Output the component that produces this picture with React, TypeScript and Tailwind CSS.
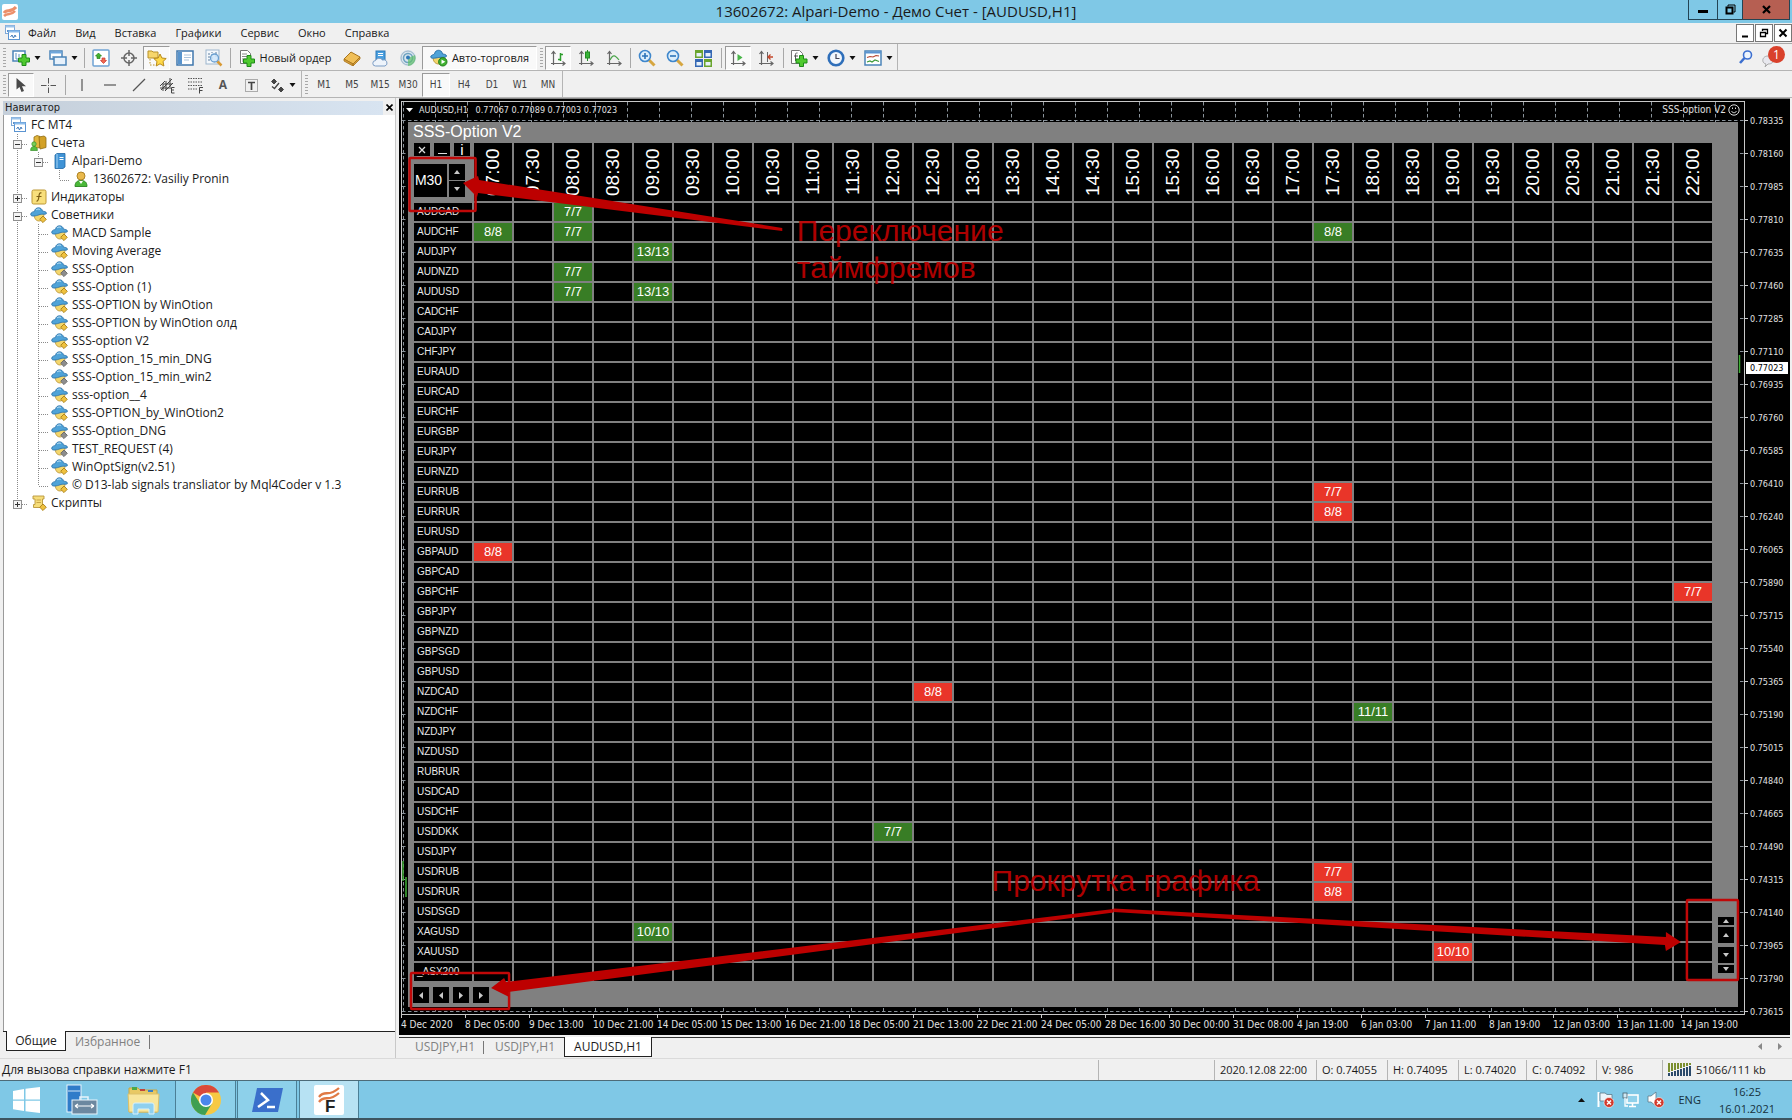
import React from "react";

type P = { className?: string };

/* ---------- icons ---------- */
const MtLogo = () => (
  <svg width="16" height="16" viewBox="0 0 16 16" className="shrink-0">
    <rect x="1.500" y=".5" width="9" height="8" fill="#fff" stroke="#7fa9d8" />
    <rect x="1.500" y=".5" width="9" height="2" fill="#9cc3ea" />
    <path d="M3.500 7 v-2 m2 3 v-3" stroke="#5b8fc9" />
    <rect x="4.500" y="5.500" width="11" height="9" fill="#fff" stroke="#5b94d1" />
    <rect x="4.500" y="5.500" width="11" height="2" fill="#8bbcec" />
    <path d="M6.500 12 l1.500-2 1.500 3 1.500-3 1 2" fill="none" stroke="#3f78b8" />
  </svg>
);
const Brand = () => (
  <svg width="16" height="16" viewBox="0 0 16 16" aria-hidden="true">
    <rect width="16" height="16" rx="2" fill="#fff" />
    <path d="M2 9 C5 4 8 10 14 3" stroke="#ec8f6a" strokeWidth="3" fill="none" />
    <path d="M2 12 C6 8 9 12 13 7" stroke="#ec8f6a" strokeWidth="2.500" fill="none" />
  </svg>
);
const GreenPlus = ({ x = 0, y = 0 }: { x?: number; y?: number }) => (
  <path transform={`translate(${x} ${y})`} d="M4 0.500h4v3.500h3.500v4H8v3.500H4V8H0.500V4H4z" fill="#4fc92f" stroke="#1c8a18" />
);
const NewChart = () => (
  <svg width="18" height="18" viewBox="0 0 18 18">
    <rect x="1" y="2" width="12" height="10" fill="#fff" stroke="#4b84b8" strokeWidth="1.500" />
    <path d="M4 4v6h6M7 5v3" stroke="#5a90c4" fill="none" />
    <GreenPlus x={6} y={5} />
  </svg>
);
const Profiles = () => (
  <svg width="18" height="18" viewBox="0 0 18 18">
    <rect x="1" y="2" width="12" height="8" fill="#fff" stroke="#4b84b8" strokeWidth="1.500" />
    <path d="M1 3.500h12" stroke="#6fa7dc" strokeWidth="2" />
    <rect x="5" y="8" width="12" height="8" fill="#e7f1fb" stroke="#4b84b8" strokeWidth="1.500" />
    <path d="M4 7v4" stroke="#4b84b8" />
  </svg>
);
const MarketWatch = () => (
  <svg width="18" height="18" viewBox="0 0 18 18">
    <rect x="1" y="1" width="16" height="16" rx="1" fill="#fff" stroke="#6fa3d4" strokeWidth="1.500" />
    <path d="M6.500 4l3 3h-1.500v2.500h-3V7H3.500z" fill="#43b32e" stroke="#23811a" strokeWidth=".7" />
    <path d="M11.500 14.500l3-3h-1.500V9h-3v2.500H8.500z" fill="#ef6a4e" stroke="#c33" strokeWidth=".7" />
  </svg>
);
const DataWindow = () => (
  <svg width="16" height="16" viewBox="0 0 16 16">
    <circle cx="8" cy="8" r="5" fill="none" stroke="#666" strokeWidth="1.500" />
    <path d="M8 0v6M8 10v6M0 8h6M10 8h6" stroke="#666" strokeWidth="1.500" />
  </svg>
);
const NavStar = () => (
  <svg width="20" height="18" viewBox="0 0 20 18">
    <path d="M1 2h4l1 1h5v6H1z" fill="#f7d66b" stroke="#b8912a" />
    <path d="M3 10v6h6" fill="none" stroke="#b8912a" strokeDasharray="1.500 1.500" />
    <path d="M13 5l1.900 4 4.300.5-3.200 3 .9 4.500-3.900-2.200L9.200 17l.8-4.500-3.200-3L11.200 9z" fill="#ffd948" stroke="#b88a1c" />
  </svg>
);
const Terminal = () => (
  <svg width="18" height="16" viewBox="0 0 18 16">
    <rect x="1" y="1" width="16" height="14" fill="#fff" stroke="#3f77ad" strokeWidth="1.500" />
    <rect x="2" y="2" width="4" height="12" fill="#5893cc" />
    <path d="M8 5h7M8 7.500h7M8 10h5" stroke="#aac3dc" />
  </svg>
);
const Tester = () => (
  <svg width="18" height="18" viewBox="0 0 18 18">
    <rect x="1" y="1" width="13" height="14" fill="#f4f8fc" stroke="#9db6cd" />
    <path d="M4 12V4M7 10V3M11 8V3" stroke="#5f7f9f" strokeDasharray="2 1" />
    <path d="M12 12l4.500 4.500" stroke="#d99a35" strokeWidth="2.500" />
    <circle cx="9.500" cy="9" r="4" fill="#cfe6fa" fillOpacity=".85" stroke="#6a9fd0" strokeWidth="1.300" />
  </svg>
);
const NewOrder = () => (
  <svg width="17" height="18" viewBox="0 0 17 18">
    <path d="M1.500 1.500h7l3 3v10h-10z" fill="#fff" stroke="#777" />
    <path d="M3 5h5M3 7.500h6M3 10h4M3 12h3" stroke="#888" />
    <GreenPlus x={4} y={6} />
  </svg>
);
const Book = () => (
  <svg width="18" height="16" viewBox="0 0 18 16">
    <path d="M1 9L8 2l9 5-7 7z" fill="#f0bf58" stroke="#a8741c" />
    <path d="M1 9v2l9 5v-2zM10 14v2l7-7V7z" fill="#d6a03c" stroke="#a8741c" strokeWidth=".8" />
  </svg>
);
const Cloud = () => (
  <svg width="17" height="17" viewBox="0 0 17 17">
    <rect x="4" y="1" width="9" height="9" fill="#4ba0e0" stroke="#2b78b8" />
    <path d="M6 3.500h5M6 5.500h5" stroke="#fff" />
    <path d="M3.500 16a2.700 2.700 0 010-5.400 4 4 0 017-.6 3 3 0 012.500 6z" fill="#eef4fb" stroke="#7b9cc4" />
  </svg>
);
const Signal = () => (
  <svg width="18" height="18" viewBox="0 0 18 18">
    <circle cx="9" cy="9" r="8" fill="#d9e5ee" />
    <circle cx="9" cy="9" r="7" fill="none" stroke="#9bb4c8" />
    <circle cx="9" cy="9" r="4.500" fill="none" stroke="#6fa3c0" strokeWidth="1.500" />
    <path d="M9 9v8a8 8 0 007-11z" fill="#5fbf6a" fillOpacity=".7" />
    <circle cx="9" cy="8.500" r="2" fill="#2f79b8" />
  </svg>
);
const Expert = ({ off = false }: { off?: boolean }) => (
  <svg width="17" height="16" viewBox="0 0 17 16" className="shrink-0">
    <path d="M4 6.500c0 5 2 7.500 5 7.500s5-3 5-7.500z" fill="#f3d66c" stroke="#bb9638" strokeWidth=".8" />
    <path d="M.7 7.500C.7 5 4 4.600 4.500 4.400 5 1.500 7 .8 8.500.8s3.500.7 4 3.400c.8 0 4 .4 4 2C16.500 8 12 6.500 9 7.800 6 9 1 10 .7 7.500z" fill="#4fa3d8" stroke="#2c74ab" strokeWidth=".9" />
    <path d="M6 3c1-1.200 3-1.200 4-.5" stroke="#b9def5" fill="none" />
    <path d="M13 9l3.300 3.300L13 15.600 9.700 12.300z" fill={off ? "#8d8d8d" : "#efc13e"} stroke={off ? "#666" : "#a97f16"} strokeWidth=".9" />
  </svg>
);
const AutoTrade = () => (
  <svg width="18" height="18" viewBox="0 0 18 18">
    <path d="M3 8c0 5 3 7 5.500 7S14 13 14 8z" fill="#f3d66c" stroke="#bb9638" />
    <path d="M.7 8C.7 6 4 5.600 4.500 5 5 2 7 1.300 8.500 1.300S12 2 12.500 5c.8 0 4 .4 4 2 0 2-5 1-8 1.500S1 10 .7 8z" fill="#4fa3d8" stroke="#2c74ab" />
    <circle cx="12.800" cy="12.800" r="4.200" fill="#3fb030" stroke="#1f7d18" />
    <path d="M11.500 10.500v4.600l3.800-2.300z" fill="#fff" />
  </svg>
);
const Axes = ({ children }: { children?: React.ReactNode }) => (
  <svg width="16" height="16" viewBox="0 0 16 16">
    <path d="M3.500 15V2M1 13.500h13M1.500 4l2-2.500 2 2.500M12.500 11.500l2.500 2-2.500 2" fill="none" stroke="#666" strokeWidth="1.200" />
    {children}
  </svg>
);
const Zoom = ({ plus = false }: { plus?: boolean }) => (
  <svg width="18" height="18" viewBox="0 0 18 18">
    <path d="M11 11l5.500 5.500" stroke="#d6a640" strokeWidth="3" />
    <circle cx="7" cy="7" r="5.500" fill="#dceefb" stroke="#3f87cc" strokeWidth="1.600" />
    <path d={plus ? "M4 7h6M7 4v6" : "M4 7h6"} stroke="#2b73b9" strokeWidth="1.600" />
  </svg>
);
const Tile = () => (
  <svg width="17" height="17" viewBox="0 0 17 17">
    <rect width="8" height="8" fill="#6aa52e" /><rect x="9" width="8" height="8" fill="#3568b4" />
    <rect y="9" width="8" height="8" fill="#3568b4" /><rect x="9" y="9" width="8" height="8" fill="#6aa52e" />
    <path d="M1.500 3h5v3.500h-5zM10.500 3h5v3.500h-5zM1.500 12h5v3.500h-5zM10.500 12h5v3.500h-5z" fill="#e8f2fb" />
  </svg>
);
const Indicator = () => (
  <svg width="18" height="18" viewBox="0 0 18 18">
    <path d="M1.500 1.500h8l3 3v10h-11z" fill="#fff" stroke="#777" />
    <path d="M7.500 4c-2-.5-2 1-2 3v5M4 7h4" stroke="#555" fill="none" />
    <GreenPlus x={5.500} y={6} />
  </svg>
);
const Clock = () => (
  <svg width="18" height="18" viewBox="0 0 18 18">
    <circle cx="9" cy="9" r="7.300" fill="#f2f7fc" stroke="#2f6fba" strokeWidth="2.600" />
    <path d="M9 5v4.500h3.500" stroke="#445" fill="none" strokeWidth="1.200" />
  </svg>
);
const Template = () => (
  <svg width="18" height="16" viewBox="0 0 18 16">
    <rect x="1" y="1" width="16" height="14" fill="#fff" stroke="#4b84b8" strokeWidth="1.500" />
    <path d="M1 2.500h16" stroke="#5b94d1" strokeWidth="2" />
    <path d="M3 7.500l3-1 3 .5 3-1.500 3 .5" stroke="#b5442e" fill="none" strokeWidth="1.200" />
    <path d="M3 12l3-1 2 1 3-2 4 1.500" stroke="#3d9a38" fill="none" strokeWidth="1.200" />
  </svg>
);
const Cursor = () => (
  <svg width="12" height="16" viewBox="0 0 12 16"><path d="M1.500 1v11.500l3-2.500 2 5 2.500-1-2-4.800H11z" fill="#4a4a4a" /></svg>
);
const Cross = () => (
  <svg width="15" height="15" viewBox="0 0 15 15"><path d="M7.500 0v5.500M7.500 9.500V15M0 7.500h5.500M9.500 7.500H15" stroke="#555" /><rect x="7" y="7" width="1" height="1" fill="#555" /></svg>
);
const Line = ({ d }: { d: string }) => (
  <svg width="14" height="14" viewBox="0 0 14 14"><path d={d} stroke="#555" strokeWidth="1.200" /></svg>
);
const Equi = () => (
  <svg width="17" height="17" viewBox="0 0 17 17">
    <path d="M1 9l5-5M2 13L13 2M6 14l8-8M1 11h11M4 7h9M7 4v9M11 1v9M4 7v7" stroke="#444" />
    <path d="M15.500 10.500H12.500v5.500h3M12.500 13h2.500" stroke="#444" fill="none" />
  </svg>
);
const Fibo = () => (
  <svg width="17" height="17" viewBox="0 0 17 17">
    <path d="M1 1.500h14M1 5h14M1 8.500h14M1 12h9" stroke="#555" strokeDasharray="1.500 1" />
    <path d="M12.500 16.500v-6h3.500M12.500 13.500h3" stroke="#444" fill="none" />
  </svg>
);
const TextBox = () => (
  <svg width="15" height="15" viewBox="0 0 15 15">
    <rect x="1.500" y="1.500" width="12" height="12" fill="none" stroke="#666" strokeDasharray="1 1" />
    <path d="M4 4.500h7M7.500 4.500V12" stroke="#444" strokeWidth="1.700" />
  </svg>
);
const Arrows = () => (
  <svg width="15" height="15" viewBox="0 0 15 15">
    <path d="M4 1l2.500 2.500L4 6 1.500 3.500zM11 9l2.500 2.500L11 14l-2.500-2.500z" fill="#444" stroke="#444" />
    <path d="M2 8.500l2.500 2L9 5" fill="none" stroke="#444" strokeWidth="1.300" />
  </svg>
);
const Accounts = () => (
  <svg width="17" height="16" viewBox="0 0 17 16" className="shrink-0">
    <path d="M4 2l3-1.500 3 1v11l-6 1z" fill="#e2b63c" stroke="#8f6c14" strokeWidth=".8" />
    <path d="M9 2l5-1 2 1.500v10L10 14z" fill="#d3a126" stroke="#8f6c14" strokeWidth=".8" />
    <circle cx="4" cy="9" r="2.200" fill="#7ccf58" stroke="#37912a" strokeWidth=".7" />
    <path d="M.6 15.500c0-3 1.500-4 3.400-4s3.400 1 3.400 4z" fill="#58be42" stroke="#37912a" strokeWidth=".7" />
  </svg>
);
const Server = () => (
  <svg width="16" height="16" viewBox="0 0 16 16" className="shrink-0">
    <path d="M3 2l2-1.500h8V14l-2 1.500H3z" fill="#3f93d6" stroke="#2067a5" strokeWidth=".8" />
    <path d="M5 1v14" stroke="#a9d4f2" /><path d="M7.500 4.500h4M7.500 6.500h4" stroke="#fff" />
  </svg>
);
const Person = () => (
  <svg width="16" height="16" viewBox="0 0 16 16" className="shrink-0">
    <path d="M2 15.500C2 11 4.500 9.500 8 9.500s6 1.500 6 6z" fill="#4ab839" stroke="#2a8520" strokeWidth=".9" />
    <path d="M6 10l2 3 2-3z" fill="#fff" />
    <circle cx="8" cy="5" r="4" fill="#eab94c" stroke="#a67a1c" strokeWidth=".9" />
  </svg>
);
const Func = () => (
  <svg width="16" height="16" viewBox="0 0 16 16" className="shrink-0">
    <rect x="1" y="1" width="14" height="14" rx="1.500" fill="#f8df7c" stroke="#bd9834" />
    <path d="M10.500 4c-2-.8-2.300 1-2.600 3.500S7 12.500 5.500 12M5.500 7.500h5" stroke="#7c5d12" fill="none" strokeWidth="1.200" />
  </svg>
);
const Script = () => (
  <svg width="16" height="16" viewBox="0 0 16 16" className="shrink-0">
    <path d="M2 1h11v3h-1.500v8.500H2.500v-3H4V4H2z" fill="#f6dd7a" stroke="#b8953a" strokeWidth=".9" />
    <path d="M5.500 5h4.500M5.500 7.500h4.500" stroke="#c8a548" />
    <path d="M12 9l3.300 3.200L12 15.500 8.700 12.200z" fill="#efc13e" stroke="#a97f16" strokeWidth=".9" />
  </svg>
);
const Drop = () => (
  <svg width="7" height="4" viewBox="0 0 7 4" aria-hidden="true"><path d="M.5 0h6L3.500 4z" fill="#111" /></svg>
);

/* ---------- toolbar pieces ---------- */
const Grip = () => (
  <div className="flex w-2 shrink-0 items-center justify-center">
    <div className="h-5 w-[3px] bg-[repeating-linear-gradient(#a8a8a8_0_1px,#f0f0f0_1px_3px)]" />
  </div>
);
const Sep = ({ className = "w-1" }: P) => (
  <div className={`flex shrink-0 justify-center py-0.5 ${className}`}><div className="w-px bg-[#a8a8a8]" /></div>
);
const Tool = ({ label, w = "w-7", on = false, drop = false, children }: { label: string; w?: string; on?: boolean; drop?: boolean; children: React.ReactNode }) => (
  <button aria-label={label} title={label} className={`flex shrink-0 items-center justify-center gap-1 whitespace-nowrap ${w} ${on ? "border border-r-[#fff] border-b-[#fff] border-[#9a9a9a] bg-[#f9f9f9]" : ""}`}>
    {children}
    {drop && <Drop />}
  </button>
);

/* ---------- navigator ---------- */
type Guide = "v" | "t" | "e" | "n" | "minus" | "minusLast" | "plus" | "plusLast";
const GuideCell = ({ g }: { g: Guide }) => {
  const box = g.startsWith("minus") || g.startsWith("plus");
  const down = g === "v" || g === "t" || g === "minus" || g === "plus";
  return (
    <svg width="21" height="18" viewBox="0 0 21 18" className="shrink-0">
      {g !== "n" && <path d={down ? "M10.500 0v18" : "M10.500 0v10"} stroke="#8a8a8a" strokeDasharray="1 1" />}
      {g !== "n" && g !== "v" && <path d="M11 10.500h10" stroke="#8a8a8a" strokeDasharray="1 1" />}
      {box && <rect x="6.500" y="6.500" width="8" height="8" fill="#f4f4f4" stroke="#8f8f8f" />}
      {box && <path d={g.startsWith("plus") ? "M8 10.500h5M10.500 8v5" : "M8 10.500h5"} stroke="#333" />}
    </svg>
  );
};
const tree: [Guide[], React.ReactNode, string][] = [
  [["minus"], <Accounts />, "Счета"],
  [["v", "minusLast"], <Server />, "Alpari-Demo"],
  [["v", "n", "e"], <Person />, "13602672: Vasiliy Pronin"],
  [["plus"], <Func />, "Индикаторы"],
  [["minus"], <Expert />, "Советники"],
  [["v", "t"], <Expert />, "MACD Sample"],
  [["v", "t"], <Expert />, "Moving Average"],
  [["v", "t"], <Expert off />, "SSS-Option"],
  [["v", "t"], <Expert />, "SSS-Option (1)"],
  [["v", "t"], <Expert />, "SSS-OPTION by WinOtion"],
  [["v", "t"], <Expert />, "SSS-OPTION by WinOtion олд"],
  [["v", "t"], <Expert />, "SSS-option V2"],
  [["v", "t"], <Expert off />, "SSS-Option_15_min_DNG"],
  [["v", "t"], <Expert off />, "SSS-Option_15_min_win2"],
  [["v", "t"], <Expert />, "sss-option__4"],
  [["v", "t"], <Expert />, "SSS-OPTION_by_WinOtion2"],
  [["v", "t"], <Expert off />, "SSS-Option_DNG"],
  [["v", "t"], <Expert off />, "TEST_REQUEST (4)"],
  [["v", "t"], <Expert />, "WinOptSign(v2.51)"],
  [["v", "e"], <Expert />, "© D13-lab signals transliator by Mql4Coder v 1.3"],
  [["plusLast"], <Script />, "Скрипты"],
];
const Navigator = () => (
  <aside className="flex w-[396px] shrink-0 flex-col border-r border-[#c8c8c8] pt-0.5 pl-[3px]">
    <div className="flex h-[15px] items-center justify-between">
      <h2 className="flex-1 bg-gradient-to-r from-[#c5cfda] to-[#d8e4f1] pl-0.5 font-['DejaVu_Sans_Condensed','DejaVu_Sans',sans-serif] text-[11px] leading-[14px] text-[#222]">Навигатор</h2>
      <button aria-label="Закрыть" className="flex w-3 justify-center">
        <svg width="7" height="7" viewBox="0 0 7 7"><path d="M.5.5l6 6M6.500.5l-6 6" stroke="#000" strokeWidth="1.600" /></svg>
      </button>
    </div>
    <ul className="flex-1 border-l border-[#9a9a9a] bg-white pt-px pl-[3px]">
      <li className="flex h-[18px] items-center gap-[5px] pl-[3px]"><MtLogo /><span>FC MT4</span></li>
      {tree.map(([g, icon, text]) => (
        <li key={text} className="flex h-[18px] items-center whitespace-nowrap">
          {g.map((x, i) => <GuideCell key={i} g={x} />)}
          <span className="ml-0.5 flex items-center gap-1">
            <span className="flex w-[17px] justify-center">{icon}</span>{text}
          </span>
        </li>
      ))}
    </ul>
    <div className="flex h-[27px] items-start border-t border-[#222]">
      <button className="-mt-px ml-[3px] h-5 w-[60px] border border-t-0 border-[#222] bg-white">Общие</button>
      <button className="h-5 px-[9px] text-[#808080]">Избранное</button>
      <span className="mt-[3px] h-[14px] w-px bg-[#777]" />
    </div>
  </aside>
);

/* ---------- matrix ---------- */
const times = Array.from({ length: 31 }, (_, i) => `${String(7 + Math.floor(i / 2)).padStart(2, "0")}:${i % 2 ? "30" : "00"}`);
const symbols = "AUDCAD AUDCHF AUDJPY AUDNZD AUDUSD CADCHF CADJPY CHFJPY EURAUD EURCAD EURCHF EURGBP EURJPY EURNZD EURRUB EURRUR EURUSD GBPAUD GBPCAD GBPCHF GBPJPY GBPNZD GBPSGD GBPUSD NZDCAD NZDCHF NZDJPY NZDUSD RUBRUR USDCAD USDCHF USDDKK USDJPY USDRUB USDRUR USDSGD XAGUSD XAUUSD _ASX200".split(" ");
const signals: Record<string, [string, "up" | "down"]> = {
  "AUDCAD 08:00": ["7/7", "up"], "AUDCHF 07:00": ["8/8", "up"], "AUDCHF 08:00": ["7/7", "up"], "AUDCHF 17:30": ["8/8", "up"],
  "AUDJPY 09:00": ["13/13", "up"], "AUDNZD 08:00": ["7/7", "up"], "AUDUSD 08:00": ["7/7", "up"], "AUDUSD 09:00": ["13/13", "up"],
  "EURRUB 17:30": ["7/7", "down"], "EURRUR 17:30": ["8/8", "down"], "GBPAUD 07:00": ["8/8", "down"], "GBPCHF 22:00": ["7/7", "down"],
  "NZDCAD 12:30": ["8/8", "down"], "NZDCHF 18:00": ["11/11", "up"], "USDDKK 12:00": ["7/7", "up"], "USDRUB 17:30": ["7/7", "down"],
  "USDRUR 17:30": ["8/8", "down"], "XAGUSD 09:00": ["10/10", "up"], "XAUUSD 19:00": ["10/10", "down"],
};
const tri = { up: "M0 4h6L3 0z", down: "M0 0h6L3 4z", left: "M4 0v7L0 3.500z", right: "M0 0v7l4-3.500z" };
const Step = ({ dir, label, h = "h-4" }: { dir: keyof typeof tri; label: string; h?: string }) => {
  const side = dir === "left" || dir === "right";
  return (
    <button aria-label={label} className={`flex w-4 items-center justify-center bg-black ${h}`}>
      <svg width={side ? 4 : 6} height={side ? 7 : 4}><path d={tri[dir]} fill="#c8c8c8" /></svg>
    </button>
  );
};
const Matrix = () => (
  <section className="relative mx-[6px] bg-[#808080] pl-1 font-['Liberation_Sans',Arial,sans-serif] text-white">
    <h1 className="h-[19px] pl-px text-[16px] leading-5">SSS-Option V2</h1>
    <div className="flex">
      <div className="min-w-0 flex-1">
        <table className="w-full table-fixed border-separate border-spacing-[2px]">
          <thead>
            <tr>
              <th className="h-[58px] w-[58px] p-0 align-top font-normal">
                <div className="flex h-[13px] gap-1">
                  <button aria-label="Закрыть панель" className="flex w-4 items-center justify-center bg-black"><svg width="8" height="8"><path d="M1 1l6 6M7 1L1 7" stroke="#ddd" strokeWidth="1.300" /></svg></button>
                  <button aria-label="Свернуть панель" className="flex w-4 items-end justify-center bg-black pb-0.5"><span className="h-px w-[9px] bg-[#ddd]" /></button>
                  <button className="w-4 bg-black text-[15px] leading-[14px]">i</button>
                </div>
                <div className="mt-2 flex h-[33px] gap-0.5">
                  <span className="w-[33px] bg-black pr-1 text-center text-[14px] leading-[33px]">M30</span>
                  <span className="flex flex-col gap-px">
                    <Step dir="up" label="Следующий таймфрейм" />
                    <Step dir="down" label="Предыдущий таймфрейм" />
                  </span>
                </div>
              </th>
              {times.map((t) => (
                <th key={t} scope="col" className="h-[58px] bg-black p-0 font-normal">
                  <div className="flex h-[58px] justify-center">
                    <span className="h-[58px] w-5 rotate-180 text-center text-[19px] leading-5 [writing-mode:vertical-rl]">{t}</span>
                  </div>
                </th>
              ))}
            </tr>
          </thead>
          <tbody>
            {symbols.map((s) => (
              <tr key={s}>
                <th scope="row" className="h-[18px] bg-black p-0 pl-[3px] text-left text-[10px] leading-[18px] font-normal text-[#e8e8e8]">{s}</th>
                {times.map((t) => {
                  const v = signals[`${s} ${t}`];
                  return (
                    <td key={t} className={`h-[18px] p-0 text-center text-[13px] leading-[18px] ${v ? (v[1] === "up" ? "bg-[#387d25]" : "bg-[#e93529]") : "bg-black"}`}>
                      {v?.[0]}
                    </td>
                  );
                })}
              </tr>
            ))}
          </tbody>
        </table>
      </div>
      <div className="flex w-6 flex-col justify-end pb-[10px] pl-1">
        <Step dir="up" label="В начало списка" h="h-2" />
        <div className="flex flex-col gap-1 py-0.5">
          <Step dir="up" label="Строка вверх" />
          <Step dir="down" label="Строка вниз" />
        </div>
        <Step dir="down" label="В конец списка" h="h-2" />
      </div>
    </div>
    <div className="flex h-6 gap-1 pt-1 pl-px">
      <Step dir="left" label="В начало графика" />
      <Step dir="left" label="Влево" />
      <Step dir="right" label="Вправо" />
      <Step dir="right" label="В конец графика" />
    </div>
  </section>
);

const prices = "0.78335 0.78160 0.77985 0.77810 0.77635 0.77460 0.77285 0.77110 0.76935 0.76760 0.76585 0.76410 0.76240 0.76065 0.75890 0.75715 0.75540 0.75365 0.75190 0.75015 0.74840 0.74665 0.74490 0.74315 0.74140 0.73965 0.73790 0.73615".split(" ");
const dates = ["4 Dec 2020", "8 Dec 05:00", "9 Dec 13:00", "10 Dec 21:00", "14 Dec 05:00", "15 Dec 13:00", "16 Dec 21:00", "18 Dec 05:00", "21 Dec 13:00", "22 Dec 21:00", "24 Dec 05:00", "28 Dec 16:00", "30 Dec 00:00", "31 Dec 08:00", "4 Jan 19:00", "6 Jan 03:00", "7 Jan 11:00", "8 Jan 19:00", "12 Jan 03:00", "13 Jan 11:00", "14 Jan 19:00"];

const Annotations = () => (
  <div className="pointer-events-none absolute inset-0 font-['Liberation_Sans',Arial,sans-serif] text-[30px] leading-[37px] text-[#c00000]/90">
    <svg className="absolute inset-0 h-full w-full" viewBox="400 98 1390 936" preserveAspectRatio="none" fill="none">
      <g stroke="#c00808" strokeWidth="2.500">
        <rect x="410.500" y="157" width="66" height="53" rx="1" />
        <rect x="412" y="972" width="98" height="36" rx="1" />
        <rect x="1687" y="899" width="51" height="80" rx="1" />
      </g>
      <g fill="#bd0000">
        <path d="M464 182l15-7 1 4 303 48v3l-304-38-1 4z" />
        <path d="M492 987l13-10 2 4 607-73v3.500L509 991l1 5z" />
        <path d="M1681 941l-15-10v5L1114 907.500v3.500l551 33 1 6z" />
      </g>
    </svg>
    <p className="absolute top-[16%] left-[28.600%] -translate-y-1/2 whitespace-pre">{"Переключение\nтаймфремов"}</p>
    <p className="absolute top-[83.400%] left-[42.600%] -translate-y-1/2 whitespace-nowrap">Прокрутка графика</p>
  </div>
);

const Chart = () => (
  <div className="relative flex flex-1 flex-col overflow-hidden border-t border-[#888] bg-black font-['DejaVu_Sans_Condensed','DejaVu_Sans',sans-serif] text-[9px] text-[#e0e0e0]">
    <div className="flex flex-1 pt-0.5 pl-0.5">
      <div className="relative min-w-0 flex-1 border border-[#c8c8c8]">
        <svg className="absolute inset-0 h-full w-full" aria-hidden="true">
          <defs>
            <pattern id="grid" x="1" width="32" height="6" patternUnits="userSpaceOnUse"><path d="M.5 0v3.500" stroke="#8a939b" /></pattern>
            <pattern id="ticks" y="18" width="6" height="33" patternUnits="userSpaceOnUse"><path d="M0 .5h3.500" stroke="#8a939b" /></pattern>
          </defs>
          <rect width="100%" height="100%" fill="url(#grid)" />
          <rect width="100%" height="100%" fill="url(#ticks)" />
          <path d="M1 759v20M4 775v20" stroke="#3fae36" strokeWidth="1.500" />
          <svg x="100%" overflow="visible"><path d="M-4.500 253v18" stroke="#3fae36" strokeWidth="1.500" /></svg>
        </svg>
        <div className="relative flex h-5 items-start justify-between pr-1 pl-1 leading-4">
          <span className="flex items-center gap-[6px] whitespace-pre">
            <svg width="7" height="4"><path d="M0 0h7L3.500 4z" fill="#fff" /></svg>
            AUDUSD,H1   0.77067 0.77089 0.77003 0.77023
          </span>
          <span className="flex items-center gap-0.5 text-[10px]">SSS-option V2
            <svg width="12" height="12" viewBox="0 0 12 12" fill="none" stroke="#ddd"><circle cx="6" cy="6" r="5.200" /><path d="M3.500 7c1 2.300 4 2.300 5 0M4.500 3.500v1.500M7.500 3.500v1.500" /></svg>
          </span>
        </div>
        <Matrix />
        <div className="h-[7px]" />
      </div>
      <div className="relative w-[45px] shrink-0 pt-[3px]">
        {prices.map((p) => (
          <div key={p} className="flex h-[33px] items-center gap-0.5 nth-[28]:-mb-5"><span className="h-px w-[3px] bg-[#ccc]" />{p}</div>
        ))}
        <div className="absolute top-[261px] left-px w-[42px] bg-white pl-1 leading-[12px] text-black">0.77023</div>
      </div>
    </div>
    <div className="flex h-5 overflow-hidden pl-0.5 text-[10px]">
      {dates.map((d) => (
        <div key={d} className="w-16 shrink-0 whitespace-nowrap">
          <div className="h-[3px] w-px bg-[#ccc]" />
          <div className="leading-[13px]">{d}</div>
        </div>
      ))}
    </div>
    <Annotations />
  </div>
);

/* ---------- window chrome ---------- */
const StatusCell = ({ w, children }: { w: string; children?: React.ReactNode }) => (
  <div className={`flex h-5 shrink-0 items-center gap-1 border-l border-[#b4b4b4] pl-[5px] text-[11px] whitespace-nowrap ${w}`}>{children}</div>
);

export default function App() {
  return (
    <div className="flex min-h-screen flex-col bg-[#f0f0f0] font-['Open_Sans','Noto_Sans',sans-serif] text-[12px] leading-[18px] text-[#1a1a1a]">
      <header className="relative flex h-[23px] items-center bg-[#7fc8e6] pl-[2px]">
        <Brand />
        <div className="absolute inset-x-0 text-center text-[15px] leading-[23px]">13602672: Alpari-Demo - Демо Счет - [AUDUSD,H1]</div>
        <div className="absolute top-0 right-[2px] flex h-5 border border-t-0 border-[#234454]">
          <button aria-label="Свернуть" className="flex w-7 items-end justify-center pb-[6px]"><span className="h-[3px] w-[10px] bg-black" /></button>
          <button aria-label="Развернуть" className="flex w-[26px] items-center justify-center border-x border-[#234454]">
            <svg width="11" height="11" fill="none" stroke="#000"><path d="M3 2.500V1h7v7H8.500" /><rect x="1.500" y="3.500" width="6" height="6" strokeWidth="2" /></svg>
          </button>
          <button aria-label="Закрыть" className="flex w-[46px] items-center justify-center bg-[#b65f52]">
            <svg width="9" height="9"><path d="M1 1l7 7M8 1L1 8" stroke="#000" strokeWidth="2.200" /></svg>
          </button>
        </div>
      </header>

      <nav className="flex h-[21px] items-center border-b border-[#a8a8a8] pl-1">
        <MtLogo />
        <div className="flex gap-[19px] pl-2 text-[11px]">
          {["Файл", "Вид", "Вставка", "Графики", "Сервис", "Окно", "Справка"].map((m) => <button key={m}>{m}</button>)}
        </div>
        <div className="ml-auto flex gap-px">
          {["M2 8.500h6", "M3.500 3V1.500h5v4H7M1.500 4.500h5v4h-5z", "M1.500 1.500l7 7M8.500 1.500l-7 7"].map((d, i) => (
            <button key={d} aria-label={["Свернуть окно", "Восстановить окно", "Закрыть окно"][i]} className="flex h-[18px] w-[18px] items-center justify-center border border-[#777] bg-white">
              <svg width="10" height="10"><path d={d} fill="none" stroke="#000" strokeWidth={i === 1 ? 1.3 : 2} /></svg>
            </button>
          ))}
        </div>
      </nav>

      <div className="flex h-[27px] border-b border-[#b4b4b4]">
        <div className="flex border-r border-[#b4b4b4] pt-0.5 text-[11px]">
          <Grip />
          <Tool label="Новый график" w="w-9" drop><NewChart /></Tool>
          <Tool label="Профили" w="w-[38px]" drop><Profiles /></Tool>
          <Sep />
          <Tool label="Обзор рынка" w="w-[29px]"><MarketWatch /></Tool>
          <Tool label="Окно данных"><DataWindow /></Tool>
          <Tool label="Навигатор" w="w-[27px]" on><NavStar /></Tool>
          <Tool label="Терминал" w="w-[29px]"><Terminal /></Tool>
          <Tool label="Тестер стратегий" w="w-[29px]"><Tester /></Tool>
          <Sep />
          <Tool label="Новый ордер" w="w-[106px]"><NewOrder />Новый ордер</Tool>
          <Tool label="MetaEditor"><Book /></Tool>
          <Tool label="Хранилище"><Cloud /></Tool>
          <Tool label="Сигналы"><Signal /></Tool>
          <Tool label="Авто-торговля" w="w-[115px]" on><AutoTrade />Авто-торговля</Tool>
          <Grip />
          <Tool label="Бары" w="w-[26px]" on><Axes><path d="M10.500 3v8M10.500 4.500H13M8 9.500h2.500" stroke="#2d9e2d" strokeWidth="1.500" /></Axes></Tool>
          <Tool label="Свечи" w="w-[29px]"><Axes><path d="M9.500 0v11" stroke="#238a23" /><rect x="7.500" y="2" width="4" height="6" fill="#38b438" stroke="#238a23" /></Axes></Tool>
          <Tool label="Линия"><Axes><path d="M4 10c3-6 5-5 9 0" fill="none" stroke="#4aa44a" strokeWidth="1.200" /></Axes></Tool>
          <Sep className="w-[5px]" />
          <Tool label="Увеличить"><Zoom plus /></Tool>
          <Tool label="Уменьшить"><Zoom /></Tool>
          <Tool label="Окна мозаикой"><Tile /></Tool>
          <Sep className="w-2" />
          <Tool label="Автопрокрутка" w="w-[26px]" on><Axes><path d="M7.500 4v7l5-3.500z" fill="#49b649" /></Axes></Tool>
          <Tool label="Сдвиг графика" w="w-[30px]"><Axes><path d="M9.500 2v10" stroke="#666" /><path d="M15 7h-5M12.500 4.500L10 7l2.500 2.500" fill="none" stroke="#c2452a" strokeWidth="1.300" /></Axes></Tool>
          <Sep />
          <Tool label="Индикаторы" w="w-[38px]" drop><Indicator /></Tool>
          <Tool label="Периоды" w="w-9" drop><Clock /></Tool>
          <Tool label="Шаблоны" w="w-[38px]" drop><Template /></Tool>
        </div>
        <div className="ml-auto flex items-center gap-2 pr-[7px]">
          <button aria-label="Поиск"><svg width="14" height="14" viewBox="0 0 14 14"><circle cx="8.500" cy="5" r="4" fill="#eef5fd" stroke="#3c6fd0" strokeWidth="1.600" /><path d="M5.500 8L1 13" stroke="#3c6fd0" strokeWidth="2.600" /></svg></button>
          <button aria-label="Уведомления" className="relative h-[22px] w-6">
            <svg className="absolute bottom-0 left-0" width="16" height="14" viewBox="0 0 16 14"><path d="M4 13l1-3C0 9 1 2 7 2s8 8 0 8z" fill="#e8e8ee" stroke="#aaa" /></svg>
            <span className="absolute top-0 right-0 h-[17px] w-[17px] rounded-full bg-[#d9412b] text-center text-[12px] leading-[17px] text-white">1</span>
          </button>
        </div>
      </div>

      <div className="flex h-[27px] border-b border-[#b4b4b4]">
        <div className="flex border-r border-[#b4b4b4] pt-0.5">
          <Grip />
          <Tool label="Курсор" w="w-[26px]" on><Cursor /></Tool>
          <Tool label="Перекрестие"><Cross /></Tool>
          <Sep className="w-[6px]" />
          <Tool label="Вертикальная линия"><Line d="M7 1v12" /></Tool>
          <Tool label="Горизонтальная линия"><Line d="M1 7h12" /></Tool>
          <Tool label="Трендовая линия" w="w-[29px]"><Line d="M1 13L13 1" /></Tool>
          <Tool label="Равноудаленный канал"><Equi /></Tool>
          <Tool label="Линии Фибоначчи"><Fibo /></Tool>
          <Tool label="Текст"><span className="font-bold text-[#555]">A</span></Tool>
          <Tool label="Метка"><TextBox /></Tool>
          <Tool label="Стрелки" w="w-9" drop><Arrows /></Tool>
        </div>
        <div className="flex border-r border-[#b4b4b4] pt-0.5 font-['DejaVu_Sans_Condensed','DejaVu_Sans',sans-serif] text-[10px] text-[#444]">
          <Grip />
          {["M1", "M5", "M15", "M30", "H1", "H4", "D1", "W1", "MN"].map((t) => <Tool key={t} label={t} on={t === "H1"}>{t}</Tool>)}
        </div>
      </div>

      <main className="flex flex-1">
        <Navigator />
        <div className="flex min-w-0 flex-1 flex-col pr-0.5 pl-[3px]">
          <Chart />
          <div className="mt-0.5 flex h-[21px] items-start border-t border-[#333]">
            <button className="ml-4 h-[18px] w-[57px] text-[#808080]">USDJPY,H1</button>
            <span className="mx-[11px] mt-[3px] h-[13px] w-px bg-[#777]" />
            <button className="h-[18px] w-[57px] text-[#808080]">USDJPY,H1</button>
            <button className="-mt-px ml-3 h-5 w-[88px] border border-t-0 border-[#222] bg-white">AUDUSD,H1</button>
            <span className="ml-auto flex gap-4 pt-[5px] pr-2">
              <button aria-label="Вкладки влево"><svg width="4" height="7"><path d={tri.left} fill="#888" /></svg></button>
              <button aria-label="Вкладки вправо"><svg width="4" height="7"><path d={tri.right} fill="#888" /></svg></button>
            </span>
          </div>
        </div>
      </main>

      <div className="flex h-[22px] items-center border-t border-[#dadada]">
        <span className="flex-1 pl-0.5">Для вызова справки нажмите F1</span>
        <StatusCell w="w-[116px]" />
        <StatusCell w="w-[102px]">2020.12.08 22:00</StatusCell>
        <StatusCell w="w-[71px]">O: 0.74055</StatusCell>
        <StatusCell w="w-[71px]">H: 0.74095</StatusCell>
        <StatusCell w="w-[68px]">L: 0.74020</StatusCell>
        <StatusCell w="w-[70px]">C: 0.74092</StatusCell>
        <StatusCell w="w-[66px]">V: 986</StatusCell>
        <StatusCell w="w-[130px]">
          <svg width="24" height="13" viewBox="0 0 24 13">
            {[0, 3, 6, 9, 12, 15, 18, 21].map((x, i) => (
              <g key={x}><rect x={x} width="2" height={9 - i} fill="#7b8f2f" /><rect x={x} y={10 - i} width="2" height={3 + i} fill="#2b4a6b" /></g>
            ))}
          </svg>
          51066/111 kb
        </StatusCell>
      </div>

      <footer className="flex h-10 items-stretch border-t border-b-2 border-t-[#4d6b78] border-b-[#3d5560] bg-[#7fc8e6]">
        <button aria-label="Пуск" className="flex w-[52px] items-center justify-center">
          <svg width="27" height="26" viewBox="0 0 27 26"><path d="M0 4l11-2v10.500H0zM12.500 1.700L27 0v12.500H12.500zM0 13.800h11V24L0 22.300zM12.500 13.800H27V26l-14.500-1.800z" fill="#fff" /></svg>
        </button>
        <button aria-label="Диспетчер серверов" className="flex w-[60px] items-center justify-center">
          <svg width="32" height="32" viewBox="0 0 32 32"><rect x="1" y="1" width="14" height="27" fill="#2f7cc9" stroke="#e8f4fb" /><path d="M2 7h12" stroke="#cfe6f7" /><path d="M14 16v-3h8v3" fill="none" stroke="#e8f4fb" strokeWidth="1.500" /><rect x="6" y="16" width="25" height="14" fill="#6c88a0" stroke="#e8f4fb" /><path d="M9 22h19M9 22l3-2M9 22l3 2M28 22l-3-2M28 22l-3 2" stroke="#fff" strokeWidth="1.200" /></svg>
        </button>
        <button aria-label="Проводник" className="flex w-[63px] items-center justify-center">
          <svg width="33" height="30" viewBox="0 0 33 30"><path d="M2 3h9l2 2h17v22H2z" fill="#e8c964" stroke="#c9a745" /><path d="M5 2h5v3H5z" fill="#4aa84a" /><path d="M13 4h5v2h-5z" fill="#c0463a" /><path d="M21 5h5v2h-5z" fill="#3d7fc0" /><path d="M1 9h31l-1 18H2z" fill="#f8e69c" stroke="#dcc06a" /><path d="M6 29v-9q0-2 2-2h17q2 0 2 2v9h-5v-5H11v5z" fill="#8fd0ef" stroke="#d9f1fb" /></svg>
        </button>
        <button aria-label="Chrome" className="flex w-[61px] items-center justify-center border-x border-[#4b7f96] bg-[#8dd0ea]">
          <svg width="30" height="30" viewBox="0 0 30 30">
            <circle cx="15" cy="15" r="15" fill="#f6c944" />
            <path d="M15 15L2 7.500A15 15 0 0128 7.500H15z" fill="#d9493a" />
            <path d="M2 7.500A15 15 0 0014 30l7-11.500-6-3.500-6 3.500z" fill="#3f9f53" />
            <circle cx="15" cy="15" r="7" fill="#fff" /><circle cx="15" cy="15" r="5.500" fill="#4a86ea" />
          </svg>
        </button>
        <button aria-label="PowerShell" className="ml-px flex w-[60px] items-center justify-center border-x border-[#4b7f96] bg-[#8dd0ea]">
          <svg width="31" height="24" viewBox="0 0 31 24"><path d="M5 0h26l-5 24H0z" fill="#3a6fcb" /><path d="M9 5l7 7-10 7" fill="none" stroke="#fff" strokeWidth="2.500" /><path d="M15 19h8" stroke="#fff" strokeWidth="2.500" /></svg>
        </button>
        <button aria-label="MetaTrader" className="ml-0.5 flex w-[60px] items-center justify-center border-x border-[#4b7f96] bg-[#b7e2f3]">
          <span className="relative h-[30px] w-[30px] rounded-xs bg-white">
            <svg width="30" height="30" viewBox="0 0 30 30"><path d="M5 12c6-8 9 1 20-9M5 17c6-8 9 1 20-9" fill="none" stroke="#e07a45" strokeWidth="2.300" /></svg>
            <b className="absolute bottom-[2px] left-[11px] font-['Liberation_Sans',Arial,sans-serif] text-[17px] leading-[13px] text-[#222]">F</b>
          </span>
        </button>
        <div className="ml-auto flex items-center gap-2 pr-[17px] text-[#16303c]">
          <button aria-label="Скрытые значки" className="mr-1"><svg width="7" height="4"><path d="M0 4h7L3.500 0z" fill="#111" /></svg></button>
          <svg width="17" height="17" viewBox="0 0 17 17"><path d="M1.500 1v15" stroke="#fff" strokeWidth="2" /><path d="M3 2h5l2 1.500h5V10H3z" fill="#eaf5fb" stroke="#5d7a88" strokeWidth=".8" /><circle cx="12" cy="11.500" r="5" fill="#d2392c" stroke="#fff" strokeWidth=".6" /><path d="M10 9.500l4 4M14 9.500l-4 4" stroke="#fff" strokeWidth="1.500" /></svg>
          <svg width="17" height="16" viewBox="0 0 17 16"><rect x="5" y="3" width="11" height="8" fill="#8fd0ea" stroke="#fff" strokeWidth="1.600" /><path d="M10.500 11v3M7 14.500h7" stroke="#fff" strokeWidth="1.600" /><rect x="1" y="1" width="4" height="5" fill="#cfeaf6" stroke="#49626e" strokeWidth=".8" /><path d="M3 6v8h3" stroke="#fff" fill="none" strokeWidth="1.300" /></svg>
          <svg width="17" height="17" viewBox="0 0 17 17"><path d="M1 5h3l5-4v14l-5-4H1z" fill="#fff" stroke="#5d7a88" strokeWidth=".8" /><circle cx="12" cy="11.500" r="5" fill="#d2392c" stroke="#fff" strokeWidth=".6" /><path d="M10 9.500l4 4M14 9.500l-4 4" stroke="#fff" strokeWidth="1.500" /></svg>
          <span className="ml-[6px] text-[11px]">ENG</span>
          <time className="ml-[10px] text-center text-[11px] leading-[17px]">16:25<br />16.01.2021</time>
        </div>
      </footer>
    </div>
  );
}
